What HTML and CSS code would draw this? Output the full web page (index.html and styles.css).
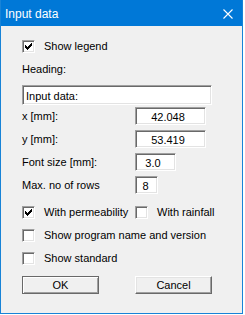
FILE: index.html
```html
<!DOCTYPE html>
<html lang="en">
<head>
    <meta charset="UTF-8">
    <meta name="viewport" content="width=device-width, initial-scale=1.0">
    <title>Input data</title>
    <link rel="stylesheet" href="styles.css">
</head>
<body>
    <div class="window">
        <div class="titlebar">
            <span class="title">Input data</span>
            <svg class="close" width="10" height="10" viewBox="0 0 10 10">
                <path d="M0.5 0.5L9.5 9.5M9.5 0.5L0.5 9.5" stroke="#fff" stroke-width="1.1" fill="none"/>
            </svg>
        </div>

        <div class="content">
            <label class="check first">
                <span class="box checked"></span>
                <span>Show legend</span>
            </label>

            <div class="heading">Heading:</div>
            <div class="field wide left">Input data:</div>

            <div class="row first-row">
                <span class="label">x [mm]:</span>
                <div class="field num w71">42.048</div>
            </div>
            <div class="row">
                <span class="label">y [mm]:</span>
                <div class="field num w71">53.419</div>
            </div>
            <div class="row">
                <span class="label">Font size [mm]:</span>
                <div class="field num w41">3.0</div>
            </div>
            <div class="row">
                <span class="label">Max. no of rows</span>
                <div class="field num w23">8</div>
            </div>

            <div class="check-pair check-top">
                <label class="check half">
                    <span class="box checked"></span>
                    <span>With permeability</span>
                </label>
                <label class="check">
                    <span class="box"></span>
                    <span>With rainfall</span>
                </label>
            </div>
            <label class="check spaced">
                <span class="box"></span>
                <span>Show program name and version</span>
            </label>
            <label class="check spaced">
                <span class="box"></span>
                <span>Show standard</span>
            </label>

            <div class="buttons">
                <button class="btn default">OK</button>
                <button class="btn">Cancel</button>
            </div>
        </div>
    </div>
</body>
</html>
```

FILE: styles.css
```css
body {
    margin: 0;
    background: #fff;
    font-family: "Liberation Sans", Arial, sans-serif;
    font-size: 11px;
    color: #000;
}
.window {
    width: 243px;
    height: 314px;
    box-sizing: border-box;
    border: 1px solid #1883d7;
    background: #f0f0f0;
}
.titlebar {
    height: 25px;
    background: #0078d7;
    display: flex;
    align-items: center;
    justify-content: space-between;
    padding: 0 9px 0 4px;
    margin-top: -1px;
    padding-top: 1px;
}
.title {
    color: #fff;
    font-size: 12px;
}
.close {
    display: block;
    margin-top: 0;
}
.content {
    padding-left: 21px;
}
.check {
    display: flex;
    align-items: center;
    height: 13px;
    line-height: 13px;
}
.check .box {
    margin-right: 9px;
}
.first {
    padding-top: 14px;
}
.box {
    width: 13px;
    height: 13px;
    box-sizing: border-box;
    flex: none;
    background: #fff;
    border-top: 1px solid #a0a0a0;
    border-left: 1px solid #a0a0a0;
    border-right: 1px solid #fff;
    border-bottom: 1px solid #fff;
    box-shadow: inset 1px 1px #696969, inset -1px -1px #e3e3e3;
}
.box.checked {
    background: #fff url("data:image/svg+xml;utf8,<svg xmlns='http://www.w3.org/2000/svg' width='7' height='7' shape-rendering='crispEdges'><path d='M0 2h1v3H0zM1 3h1v3H1zM2 4h1v3H2zM3 3h1v3H3zM4 2h1v3H4zM5 1h1v3H5zM6 0h1v3H6z' fill='black'/></svg>") no-repeat 2px 2px;
}
.heading {
    margin-top: 10px;
    height: 13px;
    line-height: 13px;
}
.field {
    box-sizing: border-box;
    height: 18px;
    line-height: 14px;
    background: #fff;
    border-top: 1px solid #a0a0a0;
    border-left: 1px solid #a0a0a0;
    border-right: 1px solid #fff;
    border-bottom: 1px solid #fff;
    box-shadow: inset 1px 1px #696969, inset -1px -1px #e3e3e3;
    padding: 2px 2px 0;
}
.wide {
    width: 190px;
    height: 20px;
    line-height: 16px;
    margin-top: 9px;
}
.left {
    padding-left: 3px;
}
.num {
    text-align: center;
    padding-right: 7px;
}
.w71 { width: 71px; }
.w41 { width: 41px; }
.w23 { width: 23px; padding-right: 4px; }
.row {
    display: flex;
    align-items: center;
    margin-top: 5px;
}
.first-row {
    margin-top: 2px;
}
.label {
    width: 113px;
    flex: none;
}
.check-pair {
    display: flex;
}
.half {
    width: 113px;
}
.check-top {
    margin-top: 12px;
}
.spaced {
    margin-top: 10px;
}
.buttons {
    display: flex;
    gap: 36px;
    margin-top: 11px;
}
.btn {
    width: 77px;
    height: 18px;
    box-sizing: border-box;
    padding: 0;
    font-family: "Liberation Sans", Arial, sans-serif;
    font-size: 11px;
    color: #000;
    background: #f0f0f0;
    border-top: 1px solid #fff;
    border-left: 1px solid #fff;
    border-right: 1px solid #696969;
    border-bottom: 1px solid #696969;
    box-shadow: inset -1px -1px #a0a0a0, inset 1px 1px #e3e3e3;
}
.btn.default {
    border: 1px solid #696969;
    box-shadow: inset 1px 1px #fff, inset -1px -1px #a0a0a0;
}
```
